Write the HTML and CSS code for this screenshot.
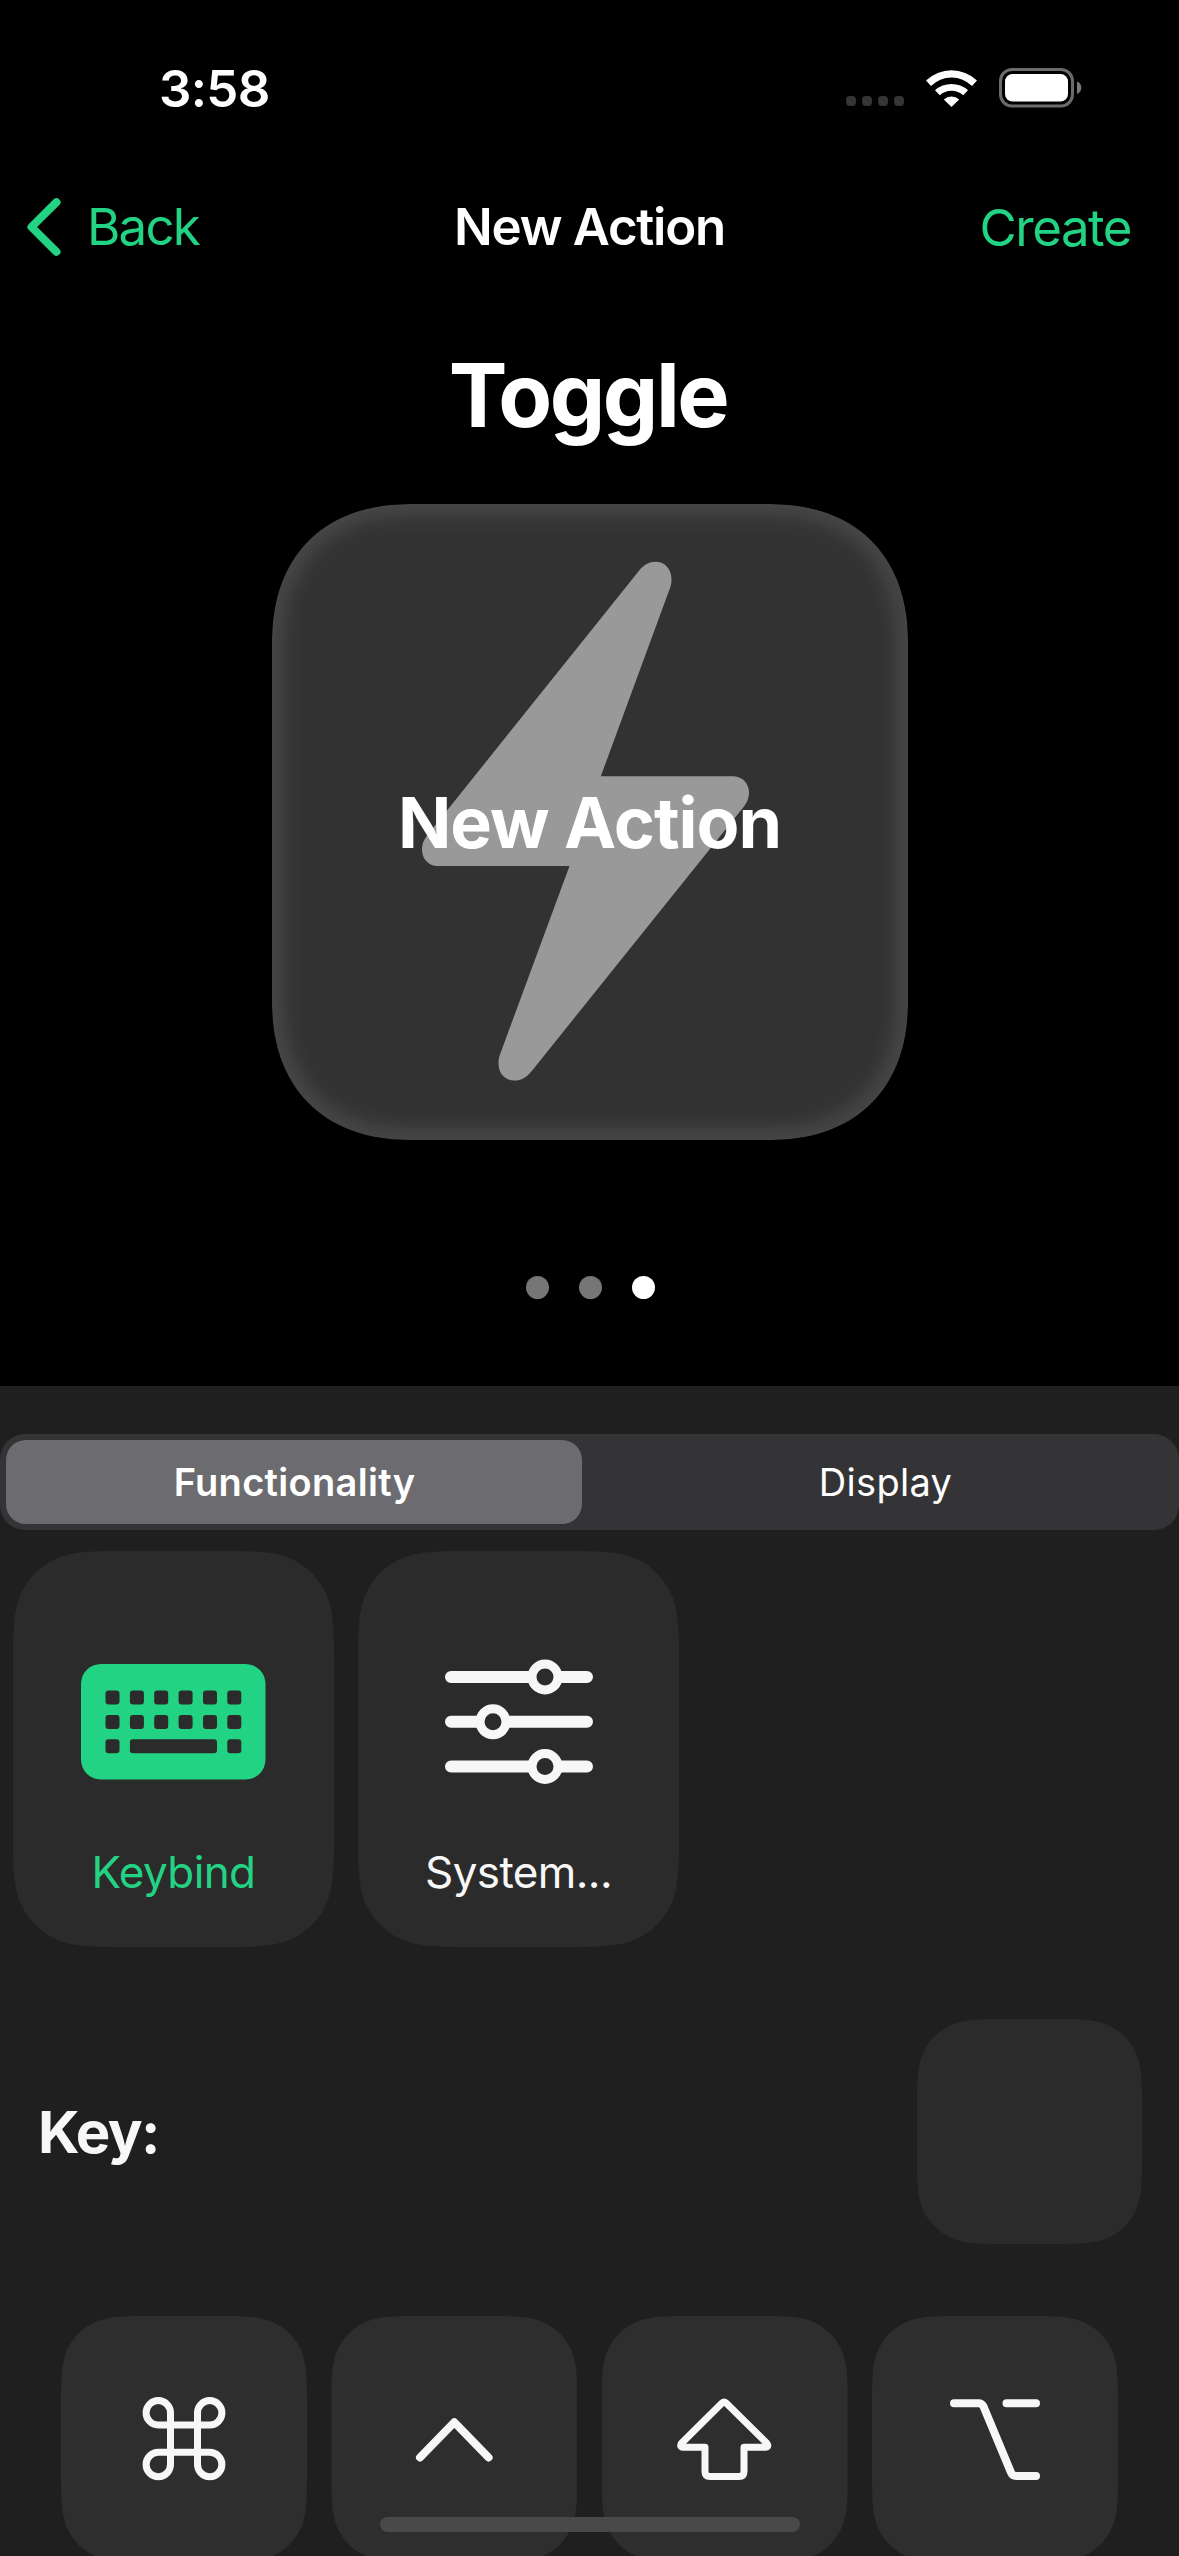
FILE: index.html
```html
<!DOCTYPE html>
<html lang="en">
<head>
<meta charset="utf-8">
<title>New Action</title>
<link rel="stylesheet" href="styles.css">
</head>
<body>
<div class="screen">
  <header class="status-bar">
    <span class="clock">3:58</span>
    <div class="status-icons">
      <div class="signal"><i></i><i></i><i></i><i></i></div>
      <svg class="wifi" width="52" height="38" viewBox="0 0 52 38">
        <path d="M0 11.5A37 37 0 0 1 51 11.5L46 17A29 29 0 0 0 5 17Z"/>
        <path d="M9 21.3A24.5 24.5 0 0 1 42 21.3L37.2 26.3A17 17 0 0 0 13.8 26.3Z"/>
        <path d="M17.8 30.4A12 12 0 0 1 33.2 30.4L25.5 38Z"/>
      </svg>
      <svg class="battery" width="83" height="40" viewBox="0 0 83 40">
        <rect class="shell" x="1.5" y="1.5" width="72" height="36.5" rx="11.5"/>
        <rect class="charge" x="6" y="6" width="63" height="27.5" rx="7.5"/>
        <path class="nub" d="M78 13.5C80.800 14.500 82.300 17 82.300 19.700S80.800 25 78 26Z"/>
      </svg>
    </div>
  </header>

  <nav class="nav-bar">
    <a class="back">
      <svg width="34" height="58" viewBox="0 0 34 58"><path d="M29.500 4.200L4.500 29L29.500 53.800"/></svg>
      <span class="back-label">Back</span>
    </a>
    <h1 class="nav-title">New Action</h1>
    <a class="create">Create</a>
  </nav>

  <section class="preview">
    <h2 class="kind">Toggle</h2>
    <div class="card">
      <svg class="card-art" width="636" height="636" viewBox="0 0 636 636">
        <defs>
          <filter id="soft" x="-10%" y="-10%" width="120%" height="120%"><feGaussianBlur stdDeviation="9"/></filter>
          <path id="plate" d="M137 0H499C584 0 636 52 636 137V499C636 584 584 636 499 636H137C52 636 0 584 0 499V137C0 52 52 0 137 0Z"/>
          <clipPath id="plate-clip"><use href="#plate"/></clipPath>
        </defs>
        <g clip-path="url(#plate-clip)">
          <use href="#plate" class="plate"/>
          <use href="#plate" class="glow" filter="url(#soft)"/>
        </g>
        <path class="bolt" d="M367 66.700C372 60.500 377 57.700 383.500 57.700C393 57.700 399.500 65 399.500 75C399.500 78 399.200 81 398.200 83.500L328.800 272.300H460.500C470 272.300 477 279 477 288.500C477 293.500 475.500 298 472 302.500L260 566.700C254.500 573.500 249.500 576.500 242.500 576.500C233 576.500 226.500 569.500 226.500 559.500C226.500 556.500 226.800 553.500 227.800 551L297.500 362H165.500C156.500 362 150 355 150 345.500C150 340.500 151.500 336 155 331.500Z"/>
      </svg>
      <span class="card-label">New Action</span>
    </div>
    <div class="pager"><i></i><i></i><i class="current"></i></div>
  </section>

  <main class="panel">
    <div class="segmented">
      <span class="segment selected">Functionality</span>
      <span class="segment">Display</span>
    </div>

    <div class="tiles">
      <div class="tile active">
        <svg width="186" height="116" viewBox="0 0 186 116">
          <rect class="fill" x="0" y="0" width="184.500" height="115.500" rx="20"/>
          <g class="hole">
            <rect x="24.500" y="26.500" width="14" height="14" rx="3"/><rect x="48.900" y="26.500" width="14" height="14" rx="3"/><rect x="73.200" y="26.500" width="14" height="14" rx="3"/><rect x="97.600" y="26.500" width="14" height="14" rx="3"/><rect x="122" y="26.500" width="14" height="14" rx="3"/><rect x="146.300" y="26.500" width="14" height="14" rx="3"/>
            <rect x="24.500" y="51" width="14" height="14" rx="3"/><rect x="48.900" y="51" width="14" height="14" rx="3"/><rect x="73.200" y="51" width="14" height="14" rx="3"/><rect x="97.600" y="51" width="14" height="14" rx="3"/><rect x="122" y="51" width="14" height="14" rx="3"/><rect x="146.300" y="51" width="14" height="14" rx="3"/>
            <rect x="24.500" y="75.200" width="14" height="14" rx="3"/><rect x="48.900" y="75.200" width="87.100" height="14" rx="3"/><rect x="146.300" y="75.200" width="14" height="14" rx="3"/>
          </g>
        </svg>
        <span class="tile-label">Keybind</span>
      </div>
      <div class="tile">
        <svg width="148" height="126" viewBox="0 0 148 126">
          <path class="rail" d="M6 18H142M6 62.800H142M6 107.500H142"/>
          <circle class="knob" cx="100" cy="18" r="13"/>
          <circle class="knob" cx="48" cy="62.800" r="13"/>
          <circle class="knob" cx="100" cy="107.500" r="13"/>
        </svg>
        <span class="tile-label">System...</span>
      </div>
    </div>

    <div class="key-row">
      <span class="key-label">Key:</span>
      <div class="key-field"></div>
    </div>

    <div class="modifiers">
      <div class="key">
        <svg width="100" height="90" viewBox="0 0 100 90">
          <path class="thin" d="M36.500 71.300V19.800A12.200 12.200 0 1 0 24.200 32H75.700A12.200 12.200 0 1 0 63.500 19.800V71.300A12.200 12.200 0 1 0 75.700 59.300H24.200A12.200 12.200 0 1 0 36.500 71.300Z"/>
        </svg>
      </div>
      <div class="key">
        <svg width="100" height="90" viewBox="0 0 100 90"><path d="M16 64.500L50.300 29.300L84.600 64.500"/></svg>
      </div>
      <div class="key">
        <svg width="100" height="90" viewBox="0 0 100 90">
          <path class="thin" d="M46.800 10.200Q49.100 8 51.400 10.200L91.800 50.200Q93.300 52.300 92.500 53.500Q92 54.200 90.500 54.200H69V78.500Q69 83.500 64 83.500H35Q30 83.500 30 78.500V54.200H8Q6.500 54.200 6 53.500Q5.200 52.300 6.500 50.200Z"/>
        </svg>
      </div>
      <div class="key">
        <svg width="100" height="90" viewBox="0 0 100 90"><path d="M9 10.200H33.500Q37 10.200 38.500 13.500L66 79.500Q67.500 83 71 83H91M61.500 10.200H91"/></svg>
      </div>
    </div>
  </main>
  <div class="home-indicator"></div>
</div>
</body>
</html>
```
FILE: styles.css
```css
* { box-sizing: border-box; }

body {
  margin: 0;
  background: #000;
  color: #fff;
  font-family: Inter, "Liberation Sans", sans-serif;
}

h1, h2 { margin: 0; }
svg { display: block; flex: none; overflow: visible; }
span, a, h1, h2 { white-space: nowrap; }

.screen {
  position: relative;
  width: 1179px;
  height: 2556px;
  overflow: hidden;
  display: flex;
  flex-direction: column;
}

/* status bar */
.status-bar {
  height: 176px;
  padding: 0 97px 0 159px;
  display: flex;
  justify-content: space-between;
  align-items: center;
}
.clock { padding-top: 1px; font-size: 51px; font-weight: 600; line-height: 60px; letter-spacing: -0.7px; }
.status-icons { display: flex; align-items: flex-start; }
.signal { display: flex; gap: 6px; margin: 28px 22px 0 0; }
.signal i { width: 10px; height: 10px; border-radius: 4px; background: #353535; }
.wifi { fill: #fff; margin: 1px 21px 0 0; }
.shell { fill: none; stroke: #6b6b6b; stroke-width: 3; }
.charge { fill: #fff; }
.nub { fill: #7a7a7a; }

/* navigation bar */
.nav-bar {
  height: 102px;
  padding: 0 48px;
  display: grid;
  grid-template-columns: 1fr auto 1fr;
  align-items: center;
  font-size: 51px;
  line-height: 60px;
}
.back { display: flex; align-items: center; gap: 26px; margin-left: -21px; color: #23d384; }
.back path { fill: none; stroke: #23d384; stroke-width: 8; stroke-linecap: round; stroke-linejoin: round; }
.back-label { letter-spacing: -1.8px; }
.nav-title { font-size: 51px; font-weight: 600; line-height: 60px; letter-spacing: -1.25px; }
.create { justify-self: end; padding-top: 2px; letter-spacing: -1.5px; color: #23d384; }

/* preview */
.preview {
  height: 1108px;
  padding-top: 56px;
  display: flex;
  flex-direction: column;
  align-items: center;
}
.kind { padding-right: 3px; font-size: 88px; font-weight: 700; line-height: 122px; letter-spacing: -2.5px; }
.card { display: grid; place-items: center; margin-top: 48px; }
.card > * { grid-area: 1 / 1; }
.plate { fill: #323232; }
.glow { fill: none; stroke: #fff; stroke-opacity: .1; stroke-width: 24; }
.bolt { fill: #999; }
.card-label { padding-top: 2px; font-size: 70px; font-weight: 700; line-height: 88px; letter-spacing: -1px; }
.pager { display: flex; margin: 136px 0 0 2px; gap: 29.500px; }
.pager i { width: 23px; height: 23px; border-radius: 50%; background: #767676; }
.pager .current { margin-left: 1px; background: #fff; }

/* panel */
.panel { flex: 1; min-height: 0; padding-top: 48px; background: #1f1f1f; }
.segmented {
  height: 96px;
  padding: 6px;
  display: grid;
  grid-template-columns: 576px 1fr;
  gap: 15px;
  border-radius: 25px;
  background: #343436;
}
.segment {
  display: flex;
  align-items: center;
  justify-content: center;
  padding: 0 0 1px 1px;
  border-radius: 20px;
  font-size: 38px;
  font-weight: 400;
  letter-spacing: .3px;
}
.selected { background: #6c6b70; font-weight: 560; }

.tiles { display: flex; gap: 24px; margin: 21px 0 0 13px; }
.tile {
  width: 321px;
  height: 396px;
  display: grid;
  grid-template-rows: 342px auto;
  justify-items: center;
  align-items: center;
  background: #2b2b2b;
  color: #f7f7f7;
  clip-path: path("M116 0H205C238.300 0 255 0 273 5.700C292.700 12.800 308.200 28.300 315.300 48C321 66 321 82.700 321 116V280C321 313.300 321 330 315.300 348C308.200 367.700 292.700 383.200 273 390.300C255 396 238.300 396 205 396H116C82.700 396 66 396 48 390.300C28.300 383.200 12.800 367.700 5.700 348C0 330 0 313.300 0 280V116C0 82.700 0 66 5.700 48C12.800 28.300 28.300 12.800 48 5.700C66 0 82.700 0 116 0Z");
}
.tile-label {
  align-self: start;
  margin-top: -48px;
  font-size: 44px;
  line-height: 54px;
  letter-spacing: -.6px;
}
.active { color: #23d384; }
.fill { fill: #23d384; }
.hole { fill: #2b2b2b; }
.rail { stroke: #f7f7f7; stroke-width: 12; stroke-linecap: round; }
.knob { fill: #2b2b2b; stroke: #f7f7f7; stroke-width: 9; }

.key-row {
  display: flex;
  justify-content: space-between;
  align-items: center;
  margin-top: 72px;
  padding: 0 37px 0 38px;
}
.key-label { font-size: 58px; font-weight: 700; line-height: 72px; letter-spacing: -1.6px; color: #f7f7f7; }
.key-field {
  width: 225px;
  height: 225px;
  background: #2b2b2b;
  clip-path: path("M91.700 0H133.300C159.700 0 172.900 0 187.100 4.500C202.600 10.100 214.900 22.400 220.500 37.900C225 52.100 225 65.300 225 91.700V133.300C225 159.700 225 172.900 220.500 187.100C214.900 202.600 202.600 214.900 187.100 220.500C172.900 225 159.700 225 133.300 225H91.700C65.300 225 52.100 225 37.900 220.500C22.400 214.900 10.100 202.600 4.500 187.100C0 172.900 0 159.700 0 133.300V91.700C0 65.300 0 52.100 4.500 37.900C10.100 22.400 22.400 10.100 37.900 4.500C52.100 0 65.300 0 91.700 0Z");
}

.modifiers { display: flex; justify-content: space-between; margin-top: 72px; padding: 0 61px; }
.key {
  width: 246px;
  height: 246px;
  display: flex;
  justify-content: center;
  padding-top: 77px;
  background: #2e2e2e;
  clip-path: path("M91.700 0H154.300C180.700 0 193.900 0 208.100 4.500C223.600 10.100 235.900 22.400 241.500 37.900C246 52.100 246 65.300 246 91.700V154.300C246 180.700 246 193.900 241.500 208.100C235.900 223.600 223.600 235.900 208.100 241.500C193.900 246 180.700 246 154.300 246H91.700C65.300 246 52.100 246 37.900 241.500C22.400 235.900 10.100 223.600 4.500 208.100C0 193.900 0 180.700 0 154.300V91.700C0 65.300 0 52.100 4.500 37.900C10.100 22.400 22.400 10.100 37.900 4.500C52.100 0 65.300 0 91.700 0Z");
}
.key path { fill: none; stroke: #f7f7f7; stroke-width: 8; stroke-linecap: round; stroke-linejoin: round; }
.key .thin { stroke-width: 7; }

.home-indicator {
  position: absolute;
  left: 380px;
  bottom: 24px;
  width: 420px;
  height: 15px;
  border-radius: 8px;
  background: #494949;
}
```
